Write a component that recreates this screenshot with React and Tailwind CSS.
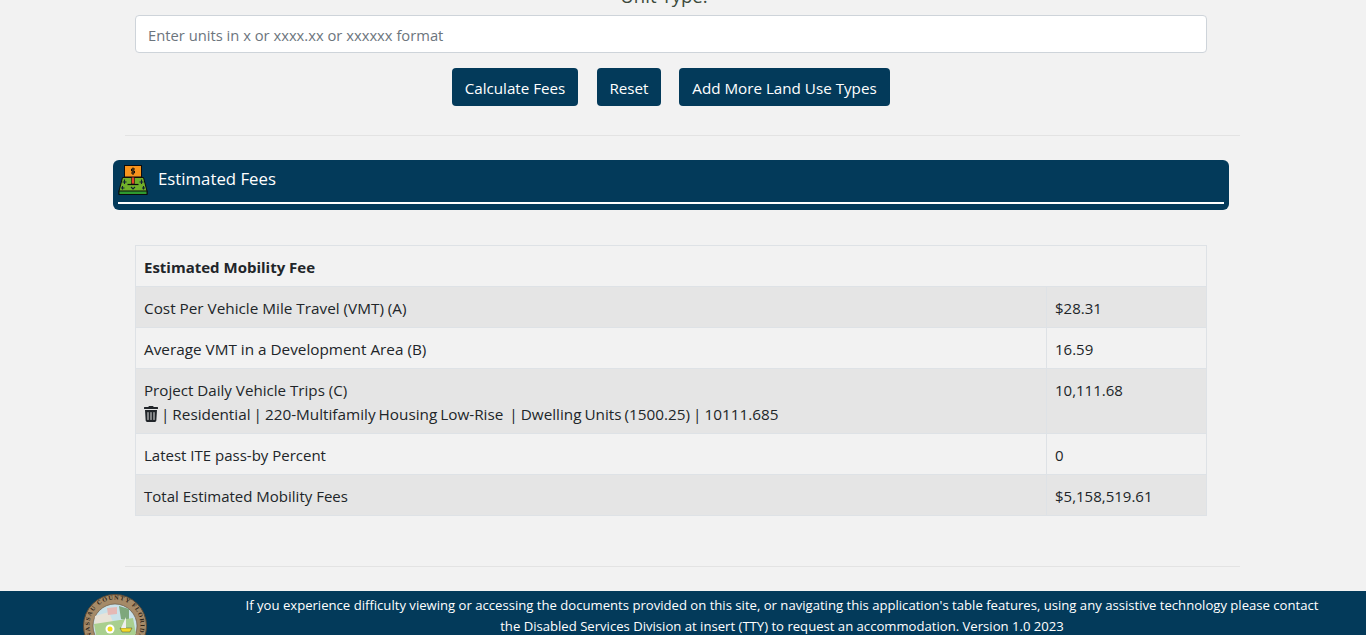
const FONT = "font-['Open_Sans','Noto_Sans',sans-serif]";

function MoneyIcon() {
  return (
    <svg width="30" height="30" viewBox="0 0 30 30" className="shrink-0">
      <path d="M4.5 12.5 H25.5 L29 26 V29.5 H1 V26 Z" fill="#71b02a" stroke="#0c0c0c" strokeWidth="1" />
      <rect x="1" y="26" width="28" height="3.5" fill="#2f9a2f" stroke="#0c0c0c" strokeWidth="1" />
      <rect x="13.5" y="11" width="3" height="8" fill="#e8442a" stroke="#0c0c0c" strokeWidth="0.6" />
      <path d="M9.5 19.5 H20.5" stroke="#0c0c0c" strokeWidth="1.2" />
      <rect x="6.5" y="0.5" width="17" height="11.5" fill="#f7941d" stroke="#0c0c0c" strokeWidth="1" />
      <path d="M15 2.5 V10 M17 4 H13.5 V6 H16.5 V8 H13" fill="none" stroke="#0c0c0c" strokeWidth="1" />
      <path d="M6.5 14.5 V19 M4.5 17 H8.5 M23.5 14.5 V19 M21.5 17 H25.5 M4.5 21 V24.5 M3 23 H6.5 M25.5 21 V24.5 M24 23 H27 M13 22 L15 24 L17 22" stroke="#123" strokeWidth="1.1" fill="none" />
    </svg>
  );
}

function Seal() {
  return (
    <svg width="64" height="64" viewBox="0 0 64 64" className="shrink-0">
      <defs>
        <path id="ring" d="M9.5 43 A25.5 25.5 0 1 1 54.5 43" fill="none" />
      </defs>
      <circle cx="32" cy="32" r="31.5" fill="#a58a68" stroke="#5d4a35" strokeWidth="1" />
      <text fontSize="6.2" fontWeight="700" fill="#2e2418" fontFamily="'Liberation Serif',serif" textLength="104" lengthAdjust="spacing">
        <textPath href="#ring" startOffset="1">NASSAU COUNTY FLORIDA</textPath>
      </text>
      <circle cx="32" cy="32" r="22" fill="#c9e2ea" stroke="#5d4a35" strokeWidth="0.6" />
      <path d="M12 22 L26 18 L30 28 L40 32 L24 38 L11 34 Z" fill="#e8e3d8" />
      <path d="M24 14 L34 13 L34 20 L25 21 Z" fill="#e5b9b5" />
      <path d="M36 12 L46 15 L46 27 L38 25 Z" fill="#7ea77c" />
      <path d="M11 30 L50 24 L53 40 L30 53 L14 46 Z" fill="#a9cf8f" />
      <circle cx="27" cy="35" r="4.5" fill="#fff" />
      <circle cx="27" cy="35" r="2.5" fill="#f5dc1a" />
      <path d="M37 34 H49 L47 38 H39 Z" fill="#f1d92a" stroke="#333" strokeWidth="0.4" />
      <path d="M43 23 V34 H38 Z" fill="#eee" />
    </svg>
  );
}

function Trash() {
  return (
    <svg width="14" height="16" viewBox="0 0 448 512" className="inline-block align-[-2px]" fill="#212529">
      <path d="M432 32H312l-9.4-18.7A24 24 0 0 0 281.1 0H166.8a23.72 23.72 0 0 0-21.4 13.3L136 32H16A16 16 0 0 0 0 48v32a16 16 0 0 0 16 16h416a16 16 0 0 0 16-16V48a16 16 0 0 0-16-16zM53.2 467a48 48 0 0 0 47.9 45h245.8a48 48 0 0 0 47.9-45L416 128H32zM144 208v224a16 16 0 0 1-32 0V208a16 16 0 0 1 32 0zm96 0v224a16 16 0 0 1-32 0V208a16 16 0 0 1 32 0zm96 0v224a16 16 0 0 1-32 0V208a16 16 0 0 1 32 0z" />
    </svg>
  );
}

function Btn({ w, children }) {
  return (
    <button className={`${w} h-[38px] rounded bg-[#033a5a] text-white text-[15.2px] leading-[24px] pt-[1px]`}>
      {children}
    </button>
  );
}

function Row({ shade, label, value, full, size = "" }) {
  return (
    <div className={`flex border-t border-[#dee2e6] ${shade ? "bg-[#e5e5e5]" : ""}`}>
      <div className={`${full ? "flex-1" : "w-[911px] border-r border-[#dee2e6]"} ${size} px-2 pt-[8px] pb-[6px] leading-[26px]`}>{label}</div>
      {!full && <div className="flex-1 px-2 pt-[8px] pb-[6px] leading-[26px]">{value}</div>}
    </div>
  );
}

export default function App() {
  return (
    <div className={`h-[635px] overflow-hidden bg-[#f2f2f2] text-[#212529] text-[15px] flex flex-col ${FONT}`}>
      <div className="h-[15px] overflow-hidden flex justify-center shrink-0 pr-[38px]">
        <span className="text-[18.6px] leading-[24px] text-[#3c4a3c] -mt-[16px]">Unit Type:</span>
      </div>
      <div className="px-[135px] shrink-0">
        <div className="w-[1072px] h-[38px] bg-white border border-[#ced4da] rounded px-3 pt-[3px] flex items-center text-[14.75px] text-[#6c757d]">
          Enter units in x or xxxx.xx or xxxxxx format
        </div>
      </div>
      <div className="flex gap-[18px] ml-[452px] mt-[15px] shrink-0">
        <Btn w="w-[126px] mr-[1px]">Calculate Fees</Btn>
        <Btn w="w-[64px]">Reset</Btn>
        <Btn w="w-[211px]">Add More Land Use Types</Btn>
      </div>
      <div className="mx-[125px] mt-[29px] border-t border-[#e3e3e3] w-[1115px] shrink-0" />
      <div className="mx-[113px] mt-[24px] w-[1116px] h-[50px] rounded-md bg-[#033a5a] px-[5px] pt-[5px] shrink-0 flex flex-col">
        <div className="flex items-start h-[37px]">
          <MoneyIcon />
          <span className="ml-[10px] mt-[1px] text-white text-[16.8px] leading-[26px]">Estimated Fees</span>
        </div>
        <div className="h-[2px] bg-white" />
      </div>
      <div className="mx-[135px] mt-[35px] w-[1072px] border border-t-0 border-[#dee2e6] shrink-0">
        <Row full label={<b className="font-bold">Estimated Mobility Fee</b>} />
        <Row shade size="text-[15.3px]" label="Cost Per Vehicle Mile Travel (VMT) (A)" value="$28.31" />
        <Row size="text-[15.3px]" label="Average VMT in a Development Area (B)" value="16.59" />
        <Row
          shade
          label={
            <div className="leading-[24px] h-[50px] pt-[1px]">
              <div className="text-[15.15px]">Project Daily Vehicle Trips (C)</div>
              <div className="text-[15.3px] whitespace-nowrap [word-spacing:-1px]">
                <Trash /> | Residential | 220-Multifamily Housing Low-Rise &nbsp;| Dwelling Units (1500.25) | 10111.685
              </div>
            </div>
          }
          value="10,111.68"
        />
        <Row label="Latest ITE pass-by Percent" value="0" />
        <Row shade label="Total Estimated Mobility Fees" value="$5,158,519.61" />
      </div>
      <div className="mx-[125px] mt-[50px] border-t border-[#e3e3e3] w-[1115px] shrink-0" />
      <div className="mt-[24px] flex-1 bg-[#033a5a] flex overflow-hidden min-h-0">
        <div className="ml-[83px] mt-[3px] shrink-0"><Seal /></div>
        <div className="ml-[90px] w-[1090px] shrink-0 text-center text-white text-[13.12px] leading-[21px] pt-[4px]">
          If you experience difficulty viewing or accessing the documents provided on this site, or navigating this application's table features, using any assistive technology please contact<br />the Disabled Services Division at insert (TTY) to request an accommodation. Version 1.0 2023
        </div>
      </div>
    </div>
  );
}
